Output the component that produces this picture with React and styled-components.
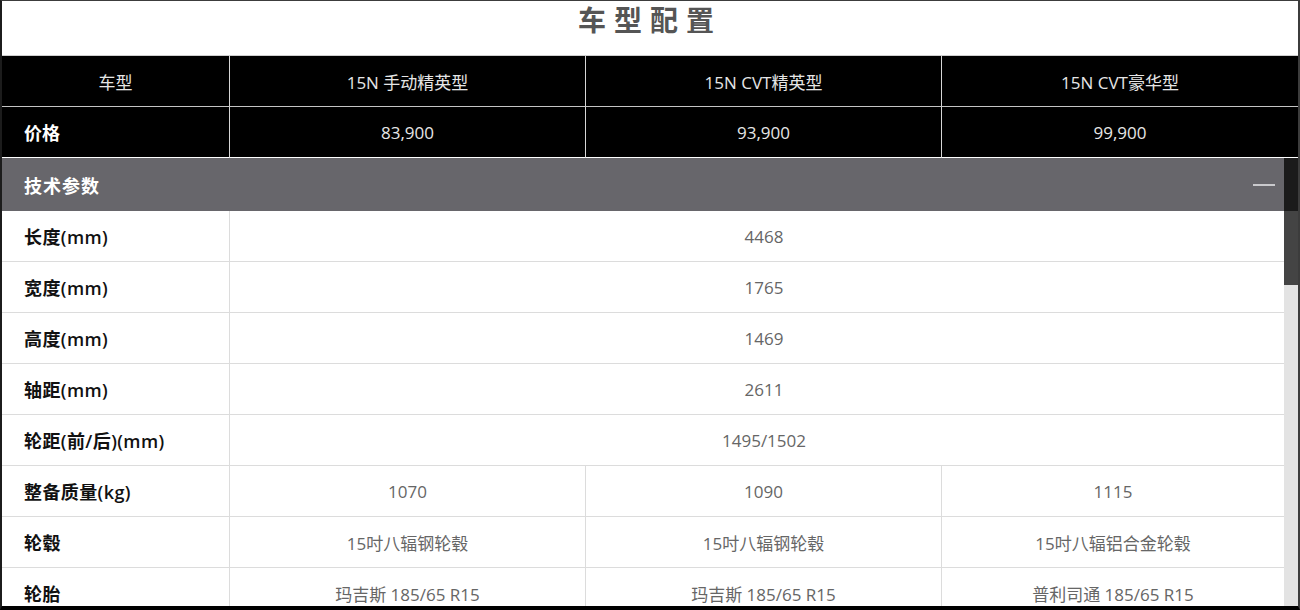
import React from "react";
import styled, { createGlobalStyle } from "styled-components";

const GlobalStyle = createGlobalStyle`
  html, body { margin: 0; padding: 0; background: #fff; }
  body { font-family: "Open Sans", "Noto Sans CJK SC", sans-serif; }
  * { box-sizing: border-box; }
`;

const FONT = `"Open Sans", "Noto Sans CJK SC", sans-serif`;
const COLS = "228px 356px 356px 1fr";

const Frame = styled.div`
  width: 1300px;
  height: 610px;
  display: flex;
  flex-direction: column;
  border-top: 1px solid #3c3c3c;
  border-left: 2px solid #1c1c1c;
  border-right: 2px solid #3c3c3c;
  border-bottom: 4px solid #000;
  overflow: hidden;
  font-family: ${FONT};
`;

const TitleBar = styled.div`
  height: 55px;
  flex: none;
  border-bottom: 1px solid #cfcfcf;
  display: flex;
  justify-content: center;
  align-items: flex-start;
`;

const Title = styled.h1`
  margin: 0;
  font-family: "Noto Sans CJK SC", sans-serif;
  font-size: 28px;
  line-height: 37px;
  font-weight: 700;
  letter-spacing: 8px;
  color: #555;
`;

const HeadGrid = styled.div`
  display: grid;
  grid-template-columns: ${COLS};
  background: #000;
  flex: none;
`;

const HeadCell = styled.div`
  height: 51px;
  display: flex;
  align-items: center;
  justify-content: ${(p) => (p.$label ? "flex-start" : "center")};
  padding-left: ${(p) => (p.$label ? "22px" : "0")};
  border-right: ${(p) => (p.$last ? "none" : "1px solid #d6d6d6")};
  border-bottom: 1px solid ${(p) => (p.$lastRow ? "#ffffff" : "#c4c4c4")};
  color: ${(p) => (p.$bold ? "#fff" : "#e6e6e6")};
  font-size: ${(p) => (p.$bold ? "18px" : "17px")};
  font-weight: ${(p) => (p.$bold ? 700 : 400)};
`;

const Body = styled.div`
  flex: 1;
  min-height: 0;
  display: flex;
`;

const Content = styled.div`
  flex: 1;
  min-width: 0;
  overflow: hidden;
`;

const ScrollTrack = styled.div`
  width: 14px;
  flex: none;
  display: flex;
  flex-direction: column;
  background: #e3e3e3;
`;

const TrackCap = styled.div`
  height: 53px;
  background: #1b1b1b;
`;

const Thumb = styled.div`
  height: 74px;
  background: #444;
`;

const SectionHeader = styled.div`
  height: 53px;
  background: #67666b;
  display: flex;
  align-items: center;
  justify-content: space-between;
  padding: 0 9px 0 22px;
`;

const SectionTitle = styled.span`
  color: #fff;
  font-size: 18px;
  font-weight: 700;
  letter-spacing: 1px;
`;

const Collapse = styled.span`
  width: 22px;
  height: 2px;
  background: #c9c9cc;
  display: block;
`;

const Row = styled.div`
  display: grid;
  grid-template-columns: ${COLS};
  border-bottom: 1px solid #dcdcdc;
  background: #fff;
`;

const Label = styled.div`
  height: 50px;
  display: flex;
  align-items: center;
  padding-left: 22px;
  border-right: 1px solid #dcdcdc;
  color: #111;
  font-size: 18px;
  font-weight: 600;
  letter-spacing: 0.4px;
`;

const Value = styled.div`
  height: 50px;
  display: flex;
  align-items: center;
  justify-content: center;
  grid-column: span ${(p) => p.$span || 1};
  padding-left: ${(p) => (p.$span > 1 ? "14px" : "0")};
  border-right: ${(p) => (p.$last ? "none" : "1px solid #dcdcdc")};
  color: #666;
  font-size: 17px;
  font-weight: 400;
`;

const models = [
  { name: "15N 手动精英型", price: "83,900" },
  { name: "15N CVT精英型", price: "93,900" },
  { name: "15N CVT豪华型", price: "99,900" },
];

const section = {
  title: "技术参数",
  rows: [
    ["长度(mm)", "4468"],
    ["宽度(mm)", "1765"],
    ["高度(mm)", "1469"],
    ["轴距(mm)", "2611"],
    ["轮距(前/后)(mm)", "1495/1502"],
    ["整备质量(kg)", "1070", "1090", "1115"],
    ["轮毂", "15吋八辐钢轮毂", "15吋八辐钢轮毂", "15吋八辐铝合金轮毂"],
    ["轮胎", "玛吉斯 185/65 R15", "玛吉斯 185/65 R15", "普利司通 185/65 R15"],
  ],
};

export default function App() {
  return (
    <>
      <GlobalStyle />
      <Frame>
        <TitleBar>
          <Title>车型配置</Title>
        </TitleBar>
        <HeadGrid>
          <HeadCell>车型</HeadCell>
          {models.map((m, i) => (
            <HeadCell key={m.name} $last={i === models.length - 1}>
              {m.name}
            </HeadCell>
          ))}
          <HeadCell $label $bold $lastRow>
            价格
          </HeadCell>
          {models.map((m, i) => (
            <HeadCell key={m.price} $lastRow $last={i === models.length - 1}>
              {m.price}
            </HeadCell>
          ))}
        </HeadGrid>
        <Body>
          <Content>
            <SectionHeader>
              <SectionTitle>{section.title}</SectionTitle>
              <Collapse />
            </SectionHeader>
            {section.rows.map(([label, ...vals]) => (
              <Row key={label}>
                <Label>{label}</Label>
                {vals.length === 1 ? (
                  <Value $span={3} $last>
                    {vals[0]}
                  </Value>
                ) : (
                  vals.map((v, i) => (
                    <Value key={i} $last={i === vals.length - 1}>
                      {v}
                    </Value>
                  ))
                )}
              </Row>
            ))}
          </Content>
          <ScrollTrack>
            <TrackCap />
            <Thumb />
          </ScrollTrack>
        </Body>
      </Frame>
    </>
  );
}
